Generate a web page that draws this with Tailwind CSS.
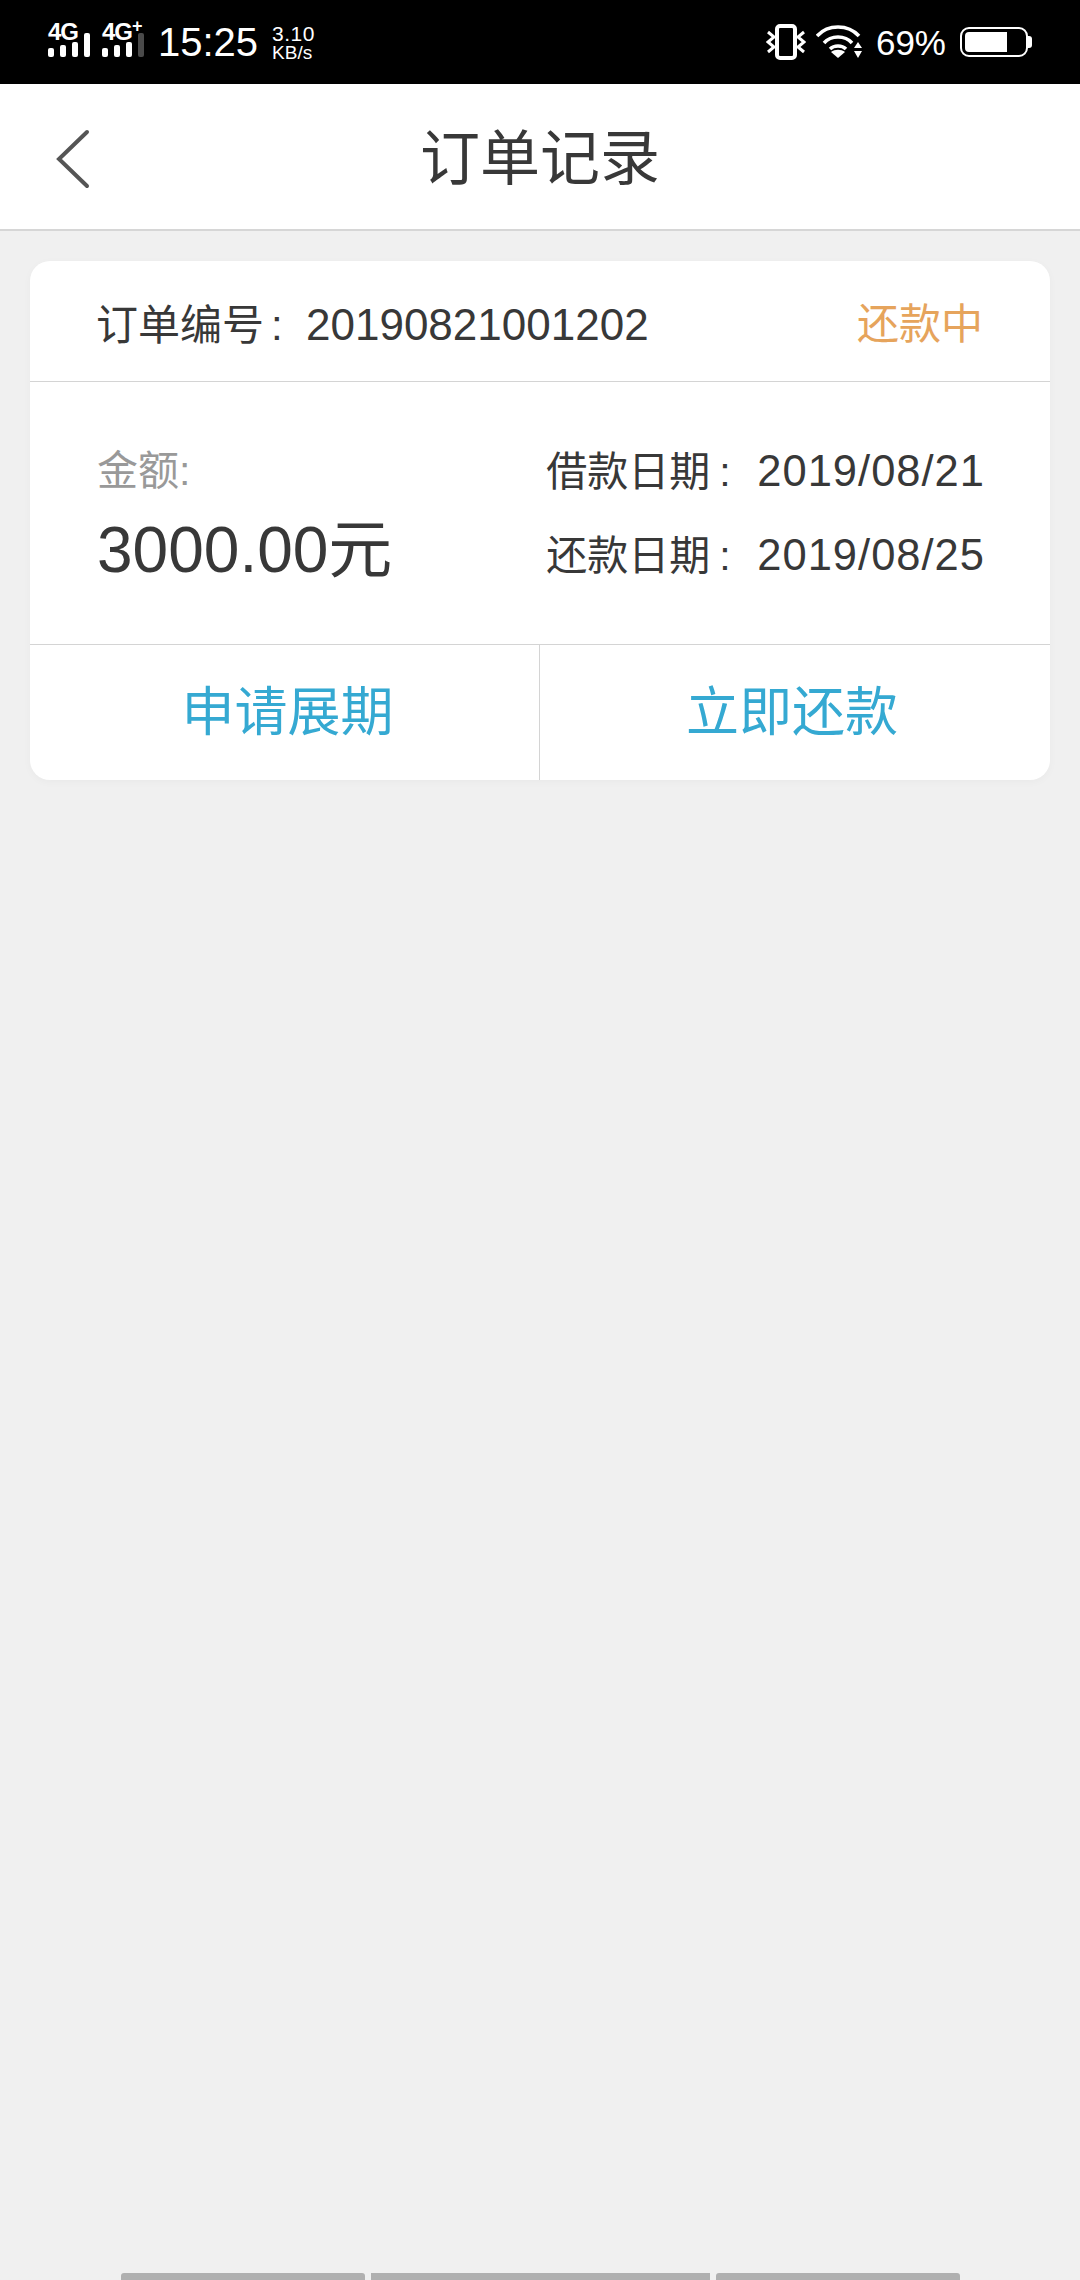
<!DOCTYPE html>
<html lang="zh">
<head>
    <meta charset="UTF-8">
    <title>订单记录</title>
    <script src="https://cdn.jsdelivr.net/npm/@tailwindcss/browser@4"></script>
</head>
<body class="bg-[#f0f0f0] font-['Liberation_Sans','Noto_Sans_CJK_SC',sans-serif]">
<div class="flex flex-col h-[2280px] w-[1080px] overflow-hidden">

    <!-- status bar -->
    <div class="h-[84px] bg-black text-white flex items-center pl-[48px] pr-[48px] shrink-0">
        <div class="w-[44px] h-[36px] relative mt-[-2px]">
            <span class="absolute left-0 top-[-3px] text-[24px] leading-[24px] font-bold tracking-[-1px]">4G</span>
            <svg class="absolute left-0 top-[9px]" width="44" height="26" viewBox="0 0 44 26" fill="#fff">
                <rect x="0" y="16" width="6" height="9" rx="2"/><rect x="12" y="13" width="6" height="12" rx="2"/><rect x="24" y="10" width="6" height="15" rx="2"/><rect x="36" y="1" width="6" height="24" rx="2"/>
            </svg>
        </div>
        <div class="w-[44px] h-[36px] relative mt-[-2px] ml-[10px]">
            <span class="absolute left-0 top-[-3px] text-[24px] leading-[24px] font-bold tracking-[-1px]">4G</span>
            <span class="absolute left-[30px] top-[-6px] text-[18px] leading-[18px] font-bold">+</span>
            <svg class="absolute left-0 top-[9px]" width="44" height="26" viewBox="0 0 44 26" fill="#fff">
                <rect x="0" y="16" width="6" height="9" rx="2"/><rect x="12" y="13" width="6" height="12" rx="2"/><rect x="24" y="10" width="6" height="15" rx="2"/><rect x="36" y="1" width="6" height="24" rx="2" fill="#4a4a4a"/>
            </svg>
        </div>
        <span class="text-[40px] leading-none ml-[12px]">15:25</span>
        <div class="ml-[14px] text-[21px] leading-[19px] mt-[1px]">
            <div class="tracking-[0.5px]">3.10</div>
            <div class="text-[19px]">KB/s</div>
        </div>
        <div class="ml-auto flex items-center">
            <svg width="40" height="36" viewBox="0 0 40 36" fill="none" stroke="#fff">
                <rect x="11" y="2" width="18" height="32" rx="3" stroke-width="4"/>
                <path d="M2 8l6 5-6 5 6 5-6 5M38 8l-6 5 6 5-6 5 6 5" stroke-width="3"/>
            </svg>
            <svg class="ml-[10px]" width="46" height="34" viewBox="0 0 46 34">
                <path d="M1 11C12-1 32-1 43 11M8 18c7-8 21-8 28 0M14 24c4-4 12-4 16 0" fill="none" stroke="#fff" stroke-width="3.5"/>
                <path d="M22 33l-7-6c4-3 10-3 14 0z" fill="#fff"/>
                <path d="M42 17l4 6h-8zM42 33l4-7h-8z" fill="#fff"/>
            </svg>
            <span class="text-[35px] leading-none ml-[14px]">69%</span>
            <div class="ml-[14px] flex items-center">
                <div class="w-[68px] h-[30px] rounded-[9px] border-[2px] border-white p-[3px]">
                    <div class="w-[42px] h-full bg-white rounded-l-[4px]"></div>
                </div>
                <div class="w-[4px] h-[12px] bg-white rounded-r-[3px]"></div>
            </div>
        </div>
    </div>

    <!-- nav -->
    <div class="h-[147px] bg-white border-b-[2px] border-[#d6d6d6] relative flex items-center justify-center shrink-0">
        <svg class="absolute left-[54px] top-[44px]" width="38" height="62" viewBox="0 0 38 62" fill="none" stroke="#555" stroke-width="4" stroke-linecap="round" stroke-linejoin="miter">
            <path d="M33 4L5 31l28 27"/>
        </svg>
        <h1 class="text-[60px] leading-none text-[#383838] mt-[6px]">订单记录</h1>
    </div>

    <!-- card -->
    <div class="mt-[30px] mx-[30px] bg-white rounded-[20px] shadow-[0_2px_8px_rgba(0,0,0,0.03)] h-[519px] flex flex-col">
        <div class="h-[121px] flex items-center justify-between pl-[66px] pr-[67px] pt-[8px] border-b border-[#d4d4d4] text-[42px] leading-none">
            <div class="text-[#383838] flex items-baseline"><span>订单编号</span><span class="w-[42px] pl-[7px]">:</span><span class="text-[44px]">20190821001202</span></div>
            <span class="text-[#e6a45c]">还款中</span>
        </div>
        <div class="h-[263px] border-b border-[#d4d4d4] flex justify-between pl-[67px] pr-[65px] pt-[67px]">
            <div>
                <div class="text-[41px] leading-[44px] text-[#999]">金额:</div>
                <div class="text-[64px] leading-[70px] text-[#383838] mt-[22px]">3000.00元</div>
            </div>
            <div class="text-[#383838] text-[41px] leading-[44px] flex flex-col gap-[40px]">
                <div class="h-[44px] flex items-baseline"><span>借款日期</span><span class="w-[47px] pl-[9px]">:</span><span class="text-[43.5px] tracking-[1px]">2019/08/21</span></div>
                <div class="h-[44px] flex items-baseline"><span>还款日期</span><span class="w-[47px] pl-[9px]">:</span><span class="text-[43.5px] tracking-[1px]">2019/08/25</span></div>
            </div>
        </div>
        <div class="flex-1 flex text-[#35a9d2] text-[53px] leading-none">
            <button class="w-[510px] pl-[6px] flex items-center justify-center border-r border-[#d4d4d4]">申请展期</button>
            <button class="flex-1 pr-[6px] flex items-center justify-center">立即还款</button>
        </div>
    </div>

    <!-- bottom tab strip -->
    <div class="mt-auto h-[7px] flex pl-[121px] gap-[6px] shrink-0">
        <div class="w-[244px] bg-[#b0b0b0] rounded-t-[3px]"></div>
        <div class="w-[339px] bg-[#b0b0b0]"></div>
        <div class="w-[244px] bg-[#b0b0b0] rounded-t-[3px]"></div>
    </div>
</div>
</body>
</html>
